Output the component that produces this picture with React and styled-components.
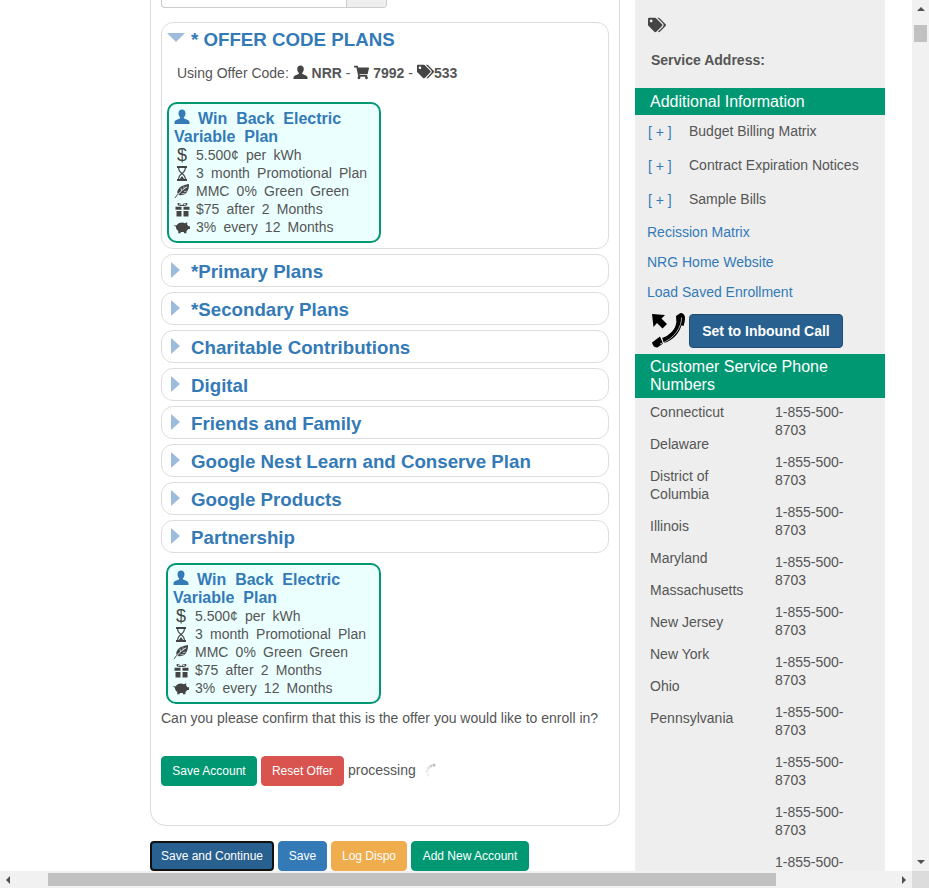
import React from 'react';
import styled, { createGlobalStyle } from 'styled-components';
import { FaShoppingCart, FaTags } from 'react-icons/fa';

const colors = {
  text: '#555',
  blue: '#337ab7',
  navy: '#286090',
  green: '#009873',
  red: '#d9534f',
  orange: '#f0ad4e',
  line: '#ddd',
  side: '#eee',
  track: '#f1f1f1',
  thumb: '#c1c1c1',
};

const GlobalStyle = createGlobalStyle`
  html, body { margin: 0; padding: 0; overflow: hidden; background: #fff; }
  body {
    font-family: "Liberation Sans", Arial, sans-serif;
    font-size: 14px;
    line-height: 18px;
    color: ${colors.text};
  }
  * { box-sizing: border-box; }
`;

const Window = styled.div`
  display: grid;
  grid-template-columns: 912px 17px;
  grid-template-rows: 871px 17px;
  width: 929px;
  height: 888px;
`;

const Viewport = styled.div`
  display: flex;
  gap: 15px;
  padding-left: 150px;
  overflow: hidden;
`;

const MainColumn = styled.div`
  width: 470px;
  flex: none;
`;

const Panel = styled.div`
  height: 826px;
  padding: 0 10px;
  border: 1px solid ${colors.line};
  border-top: none;
  border-radius: 0 0 16px 16px;
`;

const InputStub = styled.div`
  display: flex;
  width: 226px;
  height: 8px;
  margin-bottom: 14px;
  border: 1px solid #ccc;
  border-top: none;
  border-radius: 0 0 4px 4px;
  overflow: hidden;
  &::after {
    content: '';
    margin-left: auto;
    width: 39px;
    background: #eee;
    border-left: 1px solid #ccc;
  }
`;

const Section = styled.div`
  margin-bottom: 5px;
  padding: ${(p) => (p.$open ? '0 0 5px' : '0')};
  height: ${(p) => (p.$open ? '227px' : '33px')};
  border: 1px solid ${colors.line};
  border-radius: 12px;
`;

const SectionHead = styled.div`
  display: flex;
  align-items: center;
  height: 33px;
  padding-left: ${(p) => (p.$open ? '5px' : '9px')};
  gap: ${(p) => (p.$open ? '6px' : '11px')};
  color: ${colors.blue};
  font-size: 18.72px;
  font-weight: bold;
`;

const Triangle = styled.span`
  flex: none;
  width: 0;
  height: 0;
  margin-top: -4px;
  ${(p) => (p.$open
    ? 'border-left: 9px solid transparent; border-right: 9px solid transparent; border-top: 9px solid #9dbcdc;'
    : 'border-top: 8px solid transparent; border-bottom: 8px solid transparent; border-left: 9px solid #9dbcdc;')}
`;

const OfferLine = styled.div`
  height: 18px;
  margin: 7px 0 21px 15px;
  white-space: nowrap;
  svg { vertical-align: -2px; color: #444; }
`;

const Card = styled.div`
  width: ${(p) => (p.$outer ? '215px' : '214px')};
  height: 141px;
  margin: ${(p) => (p.$outer ? '10px' : '0')} 0 0 5px;
  padding: 5px;
  background: #ebffff;
  border: 2px solid ${colors.green};
  border-radius: 10px;
  word-spacing: 3.3px;
`;

const CardTitle = styled.div`
  color: ${colors.blue};
  font-size: 16px;
  font-weight: bold;
  line-height: 18px;
  word-spacing: 4.5px;
  svg { margin: 0 8px 0 0; vertical-align: -1px; }
`;

const CardRow = styled.div`
  display: flex;
  align-items: center;
  height: 18px;
  white-space: nowrap;
`;

const CardIcon = styled.span`
  display: flex;
  justify-content: center;
  align-items: center;
  flex: none;
  width: 16px;
  margin: 0 6px 0 0;
  color: #444;
  font-size: 18px;
`;

const Question = styled.p`
  margin: 5px 0 29px;
  height: 18px;
`;

const ButtonRow = styled.div`
  display: flex;
  align-items: center;
  gap: 4px;
`;

const Button = styled.button`
  width: ${(p) => p.$w}px;
  height: 30px;
  padding: 0;
  font-family: inherit;
  font-size: 12px;
  color: #fff;
  background: ${(p) => p.$bg};
  border: ${(p) => (p.$focus ? '2px solid #111' : `1px solid ${p.$bg}`)};
  border-radius: 4px;
`;

const Processing = styled.span`
  display: flex;
  align-items: center;
  gap: 9px;
  padding-bottom: 2px;
`;

const Footer = styled(ButtonRow)`
  margin-top: 15px;
`;

const Sidebar = styled.aside`
  flex: none;
  width: 250px;
  padding-top: 16px;
  background: ${colors.side};
`;

const TagLine = styled.div`
  height: 35px;
  padding-left: 13px;
  color: #444;
`;

const AddressLabel = styled.div`
  height: 37px;
  padding-left: 16px;
  font-weight: bold;
`;

const Banner = styled.div`
  padding: 4px 15px;
  color: #fff;
  background: ${colors.green};
  font-size: 16px;
  line-height: ${(p) => (p.$tall ? '18px' : '19px')};
`;

const Expander = styled.div`
  display: flex;
  height: 34px;
  padding: 7px 0 0 13px;
`;

const ExpanderList = styled.div`
  margin-bottom: 6px;
`;

const Plus = styled.a`
  width: 41px;
  margin-top: 1px;
  color: ${colors.blue};
  white-space: pre;
`;

const SideLink = styled.a`
  display: block;
  height: 30px;
  padding-left: 12px;
  color: ${colors.blue};
`;

const InboundRow = styled.div`
  display: flex;
  align-items: center;
  gap: 4px;
  height: 41px;
  padding: 0 0 6px 17px;
`;

const InboundButton = styled.button`
  width: 154px;
  height: 34px;
  font-family: inherit;
  font-size: 14px;
  font-weight: bold;
  color: #fff;
  background: ${colors.navy};
  border: 1px solid #204d74;
  border-radius: 4px;
`;

const PhoneGrid = styled.div`
  display: grid;
  grid-template-columns: 125px 80px;
  padding: 5px 0 0 15px;
`;

const GridColumn = styled.div`
  display: flex;
  flex-direction: column;
  gap: 14px;
  padding-right: ${(p) => (p.$left ? '10px' : '0')};
`;

const ScrollbarV = styled.div`
  display: flex;
  flex-direction: column;
  align-items: center;
  background: ${colors.track};
`;

const ScrollbarH = styled.div`
  display: flex;
  align-items: center;
  background: ${colors.track};
`;

const ThumbV = styled.div`
  width: 13px;
  height: 17px;
  margin-top: 14px;
  background: ${colors.thumb};
`;

const ThumbH = styled.div`
  width: 728px;
  height: 13px;
  margin-left: 38px;
  background: ${colors.thumb};
`;

const Corner = styled.div`
  background: #dcdcdc;
`;

const Arrow = styled.span`
  width: 0;
  height: 0;
  flex: none;
  ${(p) => p.$dir === 'up' && 'border-left: 4px solid transparent; border-right: 4px solid transparent; border-bottom: 4px solid #505050; margin-top: 7px;'}
  ${(p) => p.$dir === 'down' && 'border-left: 4px solid transparent; border-right: 4px solid transparent; border-top: 4px solid #505050; margin: auto 0 7px;'}
  ${(p) => p.$dir === 'left' && 'border-top: 4px solid transparent; border-bottom: 4px solid transparent; border-right: 4px solid #505050; margin-left: 6px;'}
  ${(p) => p.$dir === 'right' && 'border-top: 4px solid transparent; border-bottom: 4px solid transparent; border-left: 4px solid #505050; margin: 0 6px 0 auto;'}
`;

const UserIcon = ({ size = 16 }) => (
  <svg width={size} height={size} viewBox="0 0 16 16" fill="currentColor">
    <path d="M8 0.5c2.200 0 3.500 1.500 3.500 3.800 0 1.600-.6 3-1.500 3.900-.4.5-.3 1.100.2 1.400l3.600 1.500c1.100.5 1.700 1.300 1.700 2.400V15H.5v-1.500c0-1.100.6-1.900 1.700-2.400l3.600-1.500c.5-.3.6-.9.2-1.400-.9-.9-1.500-2.300-1.500-3.900C4.500 2 5.800.5 8 .5z" />
  </svg>
);

const HourglassIcon = () => (
  <svg width="12" height="15" viewBox="0 0 12 15" fill="none" stroke="currentColor" strokeWidth="1.200">
    <path d="M1 1h10M1 14h10" strokeWidth="1.800" />
    <path d="M2.500 1c0 3 .5 4.500 3.500 6.500 3-2 3.500-3.500 3.500-6.500M2.500 14c0-3 .5-4.500 3.500-6.500 3 2 3.500 3.500 3.500 6.500" />
    <path d="M3.500 13.500l2.500-3.500 2.500 3.500z" fill="currentColor" stroke="none" />
  </svg>
);

const LeafIcon = () => (
  <svg width="17" height="16" viewBox="0 0 17 16">
    <path d="M3.500 10.500C3 5 8 1.500 16 .5 16 8 12.500 13 6 12.500z" fill="currentColor" />
    <path d="M1 15.500C4 11 8 7 13 3.500" fill="none" stroke="currentColor" strokeWidth="1" />
    <path d="M4.500 11.500C7.500 8 10.500 5.500 14 3.500" fill="none" stroke="#ebffff" strokeWidth="1" />
    <path d="M7.500 4.500l.5 3.500M10.500 3l.3 3M8 11l3.500-.5M10.500 8.500l3-.3" fill="none" stroke="#ebffff" strokeWidth=".7" />
  </svg>
);

const GiftIcon = () => (
  <svg width="15" height="15" viewBox="0 0 15 15" fill="currentColor">
    <path d="M7 4C5 4 2.500 3.800 2.500 2 2.500.5 5.500.3 7 3.500 8.500.3 12.500.5 12.500 2c0 1.800-3 2-5.500 2zM4 2.200c0 .5 1 .7 2 .7-.6-1-2-1.500-2-.7zM11 2.200c0-.8-2-.3-2.500.7 1 0 2.500-.2 2.500-.7z" />
    <path d="M.5 4.800h6v3h-6zM8.500 4.800h6v3h-6zM1.500 9h5v5.500h-5zM8.500 9h5v5.500h-5z" />
  </svg>
);

const PiggyIcon = () => (
  <svg width="18" height="13" viewBox="0 0 18 13" fill="currentColor">
    <path d="M0 3.500c1 .8 2 .8 3 .5C4.500 1.800 7 1 9 1c1.300 0 2.300.2 3.200.6L15 .5l-.3 2.700c.7.600 1.200 1.300 1.500 2H18v3h-2c-.6 1-1.300 1.700-2 2.200V13h-2.800v-1.500H7.500V13H4.800v-2.500C3 9.300 2 7.500 2.200 5.500 1.200 5.500.3 4.800 0 3.500z" />
  </svg>
);

const InboundPhone = () => (
  <svg width="33" height="35" viewBox="0 0 33 35">
    <path d="M0 1l13 1-3.500 3.500 5.500 5.500-4.500 4.500-5.500-5.500L1.500 14z" fill="#000" />
    <path d="M27 10C26 18 19 25 11 27.500" fill="none" stroke="#000" strokeWidth="5.500" />
    <path d="M24 3l4.500-3c2.500 0 4.500 2 4.500 4.500 0 3-.5 5.500-1.500 8.500L24.500 11zM0 29.500l8-6 3 7-5.500 4c-3 0-5-2-5.500-5z" fill="#000" />
    <path d="M29.500 4.500C30 13 23 26 8 31" fill="none" stroke="#eee" strokeWidth=".7" />
  </svg>
);

const Spinner = () => (
  <svg width="11" height="14" viewBox="0 0 11 14">
    <circle cx="9" cy="2" r="1.500" fill="#bbb" />
    <circle cx="6" cy="3" r="1.500" fill="#ccc" />
    <circle cx="3.500" cy="5" r="1.500" fill="#ddd" />
    <circle cx="2" cy="8" r="1.500" fill="#e6e6e6" />
    <circle cx="3" cy="12" r="1.500" fill="#eee" />
  </svg>
);

const planRows = [
  { icon: '$', text: '5.500¢ per kWh' },
  { icon: <HourglassIcon />, text: '3 month Promotional Plan' },
  { icon: <LeafIcon />, text: 'MMC 0% Green Green' },
  { icon: <GiftIcon />, text: '$75 after 2 Months' },
  { icon: <PiggyIcon />, text: '3% every 12 Months' },
];

const PlanCard = ({ outer }) => (
  <Card $outer={outer}>
    <CardTitle>
      <UserIcon />
      Win Back Electric Variable Plan
    </CardTitle>
    {planRows.map((row) => (
      <CardRow key={row.text}>
        <CardIcon>{row.icon}</CardIcon>
        {row.text}
      </CardRow>
    ))}
  </Card>
);

const closedSections = [
  '*Primary Plans',
  '*Secondary Plans',
  'Charitable Contributions',
  'Digital',
  'Friends and Family',
  'Google Nest Learn and Conserve Plan',
  'Google Products',
  'Partnership',
];

const states = [
  'Connecticut',
  'Delaware',
  'District of Columbia',
  'Illinois',
  'Maryland',
  'Massachusetts',
  'New Jersey',
  'New York',
  'Ohio',
  'Pennsylvania',
];

const App = () => (
  <>
    <GlobalStyle />
    <Window>
      <Viewport>
        <MainColumn>
          <Panel>
            <InputStub />
            <Section $open>
              <SectionHead $open>
                <Triangle $open />
                * OFFER CODE PLANS
              </SectionHead>
              <OfferLine>
                Using Offer Code: <UserIcon size={15} /> <b>NRR</b> - <FaShoppingCart size={15} /> <b>7992</b> - <FaTags size={17} /><b>533</b>
              </OfferLine>
              <PlanCard />
            </Section>
            {closedSections.map((name) => (
              <Section key={name}>
                <SectionHead>
                  <Triangle />
                  {name}
                </SectionHead>
              </Section>
            ))}
            <PlanCard outer />
            <Question>Can you please confirm that this is the offer you would like to enroll in?</Question>
            <ButtonRow>
              <Button $bg={colors.green} $w={96}>Save Account</Button>
              <Button $bg={colors.red} $w={83}>Reset Offer</Button>
              <Processing>processing <Spinner /></Processing>
            </ButtonRow>
          </Panel>
          <Footer>
            <Button $bg={colors.navy} $w={124} $focus>Save and Continue</Button>
            <Button $bg={colors.blue} $w={49}>Save</Button>
            <Button $bg={colors.orange} $w={76}>Log Dispo</Button>
            <Button $bg={colors.green} $w={118}>Add New Account</Button>
          </Footer>
        </MainColumn>
        <Sidebar>
          <TagLine><FaTags size={18} /></TagLine>
          <AddressLabel>Service Address:</AddressLabel>
          <Banner>Additional Information</Banner>
          <ExpanderList>
            <Expander><Plus>[ + ]</Plus>Budget Billing Matrix</Expander>
            <Expander><Plus>[ + ]</Plus>Contract Expiration Notices</Expander>
            <Expander><Plus>[ + ]</Plus>Sample Bills</Expander>
          </ExpanderList>
          <SideLink>Recission Matrix</SideLink>
          <SideLink>NRG Home Website</SideLink>
          <SideLink>Load Saved Enrollment</SideLink>
          <InboundRow>
            <InboundPhone />
            <InboundButton>Set to Inbound Call</InboundButton>
          </InboundRow>
          <Banner $tall>Customer Service Phone Numbers</Banner>
          <PhoneGrid>
            <GridColumn $left>
              {states.map((state) => <div key={state}>{state}</div>)}
            </GridColumn>
            <GridColumn>
              {Array.from({ length: 10 }, (_, i) => <div key={i}>1-855-500-8703</div>)}
            </GridColumn>
          </PhoneGrid>
        </Sidebar>
      </Viewport>
      <ScrollbarV>
        <Arrow $dir="up" />
        <ThumbV />
        <Arrow $dir="down" />
      </ScrollbarV>
      <ScrollbarH>
        <Arrow $dir="left" />
        <ThumbH />
        <Arrow $dir="right" />
      </ScrollbarH>
      <Corner />
    </Window>
  </>
);

export default App;
